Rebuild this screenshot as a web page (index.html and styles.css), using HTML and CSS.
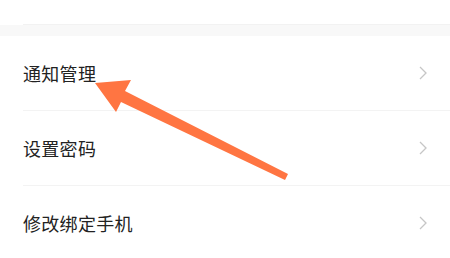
FILE: index.html
```html
<!DOCTYPE html>
<html>
<head>
<meta charset="utf-8">
<link rel="stylesheet" href="styles.css">
</head>
<body>
<div class="page">
  <div class="top"></div>
  <div class="band"></div>
  <div class="list">
    <div class="row"><span class="label">通知管理</span><svg class="chev" width="8" height="14" viewBox="0 0 8 14"><path d="M1 1 L7 7 L1 13" fill="none" stroke="#c6c6c6" stroke-width="1.3"/></svg></div>
    <div class="row"><span class="label">设置密码</span><svg class="chev" width="8" height="14" viewBox="0 0 8 14"><path d="M1 1 L7 7 L1 13" fill="none" stroke="#c6c6c6" stroke-width="1.3"/></svg></div>
    <div class="row"><span class="label">修改绑定手机</span><svg class="chev" width="8" height="14" viewBox="0 0 8 14"><path d="M1 1 L7 7 L1 13" fill="none" stroke="#c6c6c6" stroke-width="1.3"/></svg></div>
  </div>
  <svg class="arrow" width="450" height="258" viewBox="0 0 450 258">
    <polygon points="95,83 131,80 125,91 288,174 285,180 121,102 116,112" fill="#ff7542"/>
  </svg>
</div>
</body>
</html>
```
FILE: styles.css
```css
html, body {
  margin: 0;
  padding: 0;
  background: #ffffff;
}
.page {
  position: relative;
  width: 450px;
  height: 258px;
  overflow: hidden;
  font-family: "Noto Sans CJK SC", "Noto Sans", sans-serif;
}
.top {
  height: 24px;
  margin-left: 23px;
  border-bottom: 1px solid #f2f2f2;
  box-sizing: border-box;
  height: 25px;
}
.band {
  height: 11px;
  background: #f8f8f8;
}
.list {
  display: flex;
  flex-direction: column;
}
.row {
  display: flex;
  align-items: center;
  justify-content: space-between;
  height: 75px;
  margin-left: 23px;
  padding-right: 23px;
  border-bottom: 1px solid #f3f3f3;
  box-sizing: border-box;
}
.label {
  font-size: 18px;
  color: #222222;
  letter-spacing: 0.3px;
}
.chev {
  display: block;
}
.arrow {
  position: absolute;
  left: 0;
  top: 0;
}
```
